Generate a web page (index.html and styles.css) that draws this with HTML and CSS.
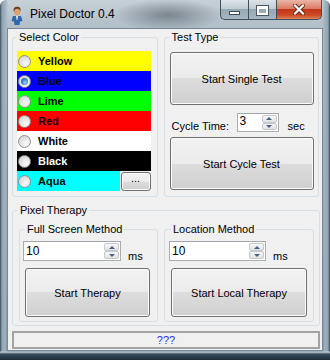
FILE: index.html
```html
<!DOCTYPE html>
<html lang="en">
<head>
    <meta charset="UTF-8">
    <title>Pixel Doctor 0.4</title>
    <link rel="stylesheet" href="styles.css">
</head>
<body>
<div class="window">
    <div class="titlebar">
        <svg class="app-icon" width="12" height="19" viewBox="0 0 12 19">
            <path d="M2.5 4 Q3 0.5 6.5 0.8 Q10 1 9.5 4.5 L9 6 L3 6 Z" fill="#6a3b1e"/>
            <ellipse cx="6.2" cy="6" rx="3" ry="3.2" fill="#dba06e"/>
            <path d="M2 10 L10 10 L11.5 15 L9 15.5 L8.5 19 L3.5 19 L3 15.5 L0.5 15 Z" fill="#2e68ae"/>
            <path d="M5 10 L7 10 L6.4 14 L5.6 14 Z" fill="#e8e8e8"/>
        </svg>
        <span class="title">Pixel Doctor 0.4</span>
        <div class="caption">
            <div class="cap cap-min"><span class="glyph-min"></span></div>
            <div class="cap cap-max"><span class="glyph-max"></span></div>
            <div class="cap cap-close">
                <svg width="12" height="11" viewBox="0 0 12 11">
                    <path d="M2 1.5 L10 9.5 M10 1.5 L2 9.5" stroke="#5a2416" stroke-width="4" stroke-linecap="square"/>
                    <path d="M2 1.5 L10 9.5 M10 1.5 L2 9.5" stroke="#ffffff" stroke-width="2.2" stroke-linecap="square"/>
                </svg>
            </div>
        </div>
    </div>

    <div class="client">
        <div class="top-row">
            <fieldset class="group color-group">
                <legend>Select Color</legend>
                <div class="color-list">
                    <label class="color-row c-yellow"><span class="radio"></span>Yellow</label>
                    <label class="color-row c-blue"><span class="radio checked"></span>Blue</label>
                    <label class="color-row c-lime"><span class="radio"></span>Lime</label>
                    <label class="color-row c-red"><span class="radio"></span>Red</label>
                    <label class="color-row c-white"><span class="radio"></span>White</label>
                    <label class="color-row c-black"><span class="radio"></span>Black</label>
                    <div class="aqua-line">
                        <label class="color-row c-aqua"><span class="radio"></span>Aqua</label>
                        <button class="btn btn-more">...</button>
                    </div>
                </div>
            </fieldset>

            <fieldset class="group test-group">
                <legend>Test Type</legend>
                <button class="btn btn-test">Start Single Test</button>
                <div class="cycle-row">
                    <span class="cycle-label">Cycle Time:</span>
                    <div class="spin spin-cycle">
                        <span class="spin-value">3</span>
                        <span class="spin-btns"><span class="spin-up"></span><span class="spin-down"></span></span>
                    </div>
                    <span class="unit unit-sec">sec</span>
                </div>
                <button class="btn btn-test btn-cycle">Start Cycle Test</button>
            </fieldset>
        </div>

        <fieldset class="group therapy-group">
            <legend>Pixel Therapy</legend>
            <div class="therapy-cols">
                <fieldset class="group sub sub-full">
                    <legend>Full Screen Method</legend>
                    <div class="ms-row">
                        <div class="spin spin-full">
                            <span class="spin-value">10</span>
                            <span class="spin-btns"><span class="spin-up"></span><span class="spin-down"></span></span>
                        </div>
                        <span class="unit">ms</span>
                    </div>
                    <button class="btn btn-therapy">Start Therapy</button>
                </fieldset>
                <fieldset class="group sub sub-local">
                    <legend>Location Method</legend>
                    <div class="ms-row">
                        <div class="spin spin-local">
                            <span class="spin-value">10</span>
                            <span class="spin-btns"><span class="spin-up"></span><span class="spin-down"></span></span>
                        </div>
                        <span class="unit">ms</span>
                    </div>
                    <button class="btn btn-therapy btn-local">Start Local Therapy</button>
                </fieldset>
            </div>
        </fieldset>

        <div class="status">???</div>
    </div>
</div>
</body>
</html>
```

FILE: styles.css
```css
body {
    margin: 0;
    font-family: "Liberation Sans", Arial, sans-serif;
    font-size: 11px;
    color: #000;
    background: #ffffff;
}
.window {
    width: 330px;
    height: 360px;
    box-sizing: border-box;
    border-radius: 6px 6px 0 0;
    display: flex;
    flex-direction: column;
    background:
        linear-gradient(to top, #1f2d38 0, #3a4f60 6px, #c9d3da 8px, rgba(0,0,0,0) 9px),
        radial-gradient(ellipse 55px 16px at 168px 15px, rgba(70,80,90,0.55), rgba(70,80,90,0) 100%),
        linear-gradient(to right, #3b4b57 0, #8fa3b2 2px, #9fb2bf 5px, rgba(0,0,0,0) 8px),
        linear-gradient(to left, #3b4b57 0, #8fa3b2 2px, #9fb2bf 5px, rgba(0,0,0,0) 8px),
        linear-gradient(to bottom, #c7d0d6 0, #b1bec7 28px, #95a9b7 180px, #6c8597 100%);
}

/* title bar */
.titlebar {
    height: 28px;
    display: flex;
    align-items: flex-start;
}
.app-icon {
    margin: 6px 0 0 11px;
    flex: none;
}
.title {
    margin: 7px 0 0 7px;
    font-size: 12px;
    line-height: 15px;
    color: #000;
}
.caption {
    margin-left: auto;
    margin-right: 8px;
    display: flex;
}
.cap {
    height: 20px;
    box-sizing: border-box;
    border: 1px solid #3f4f5b;
    border-top: none;
    display: flex;
    align-items: center;
    justify-content: center;
}
.cap-min {
    width: 28px;
    border-right: none;
    border-radius: 0 0 0 5px;
    background: linear-gradient(#dde4e9 0, #c2ccd3 45%, #97a8b3 50%, #a7b6c0 100%);
}
.cap-max {
    width: 28px;
    border-right: none;
    background: linear-gradient(#dde4e9 0, #c2ccd3 45%, #97a8b3 50%, #a7b6c0 100%);
}
.cap-close {
    width: 46px;
    border-radius: 0 0 5px 0;
    background: linear-gradient(#eab6a8 0, #dc7c64 45%, #c3371a 50%, #cc4a25 80%, #e0855a 100%);
}
.glyph-min {
    width: 9px;
    height: 2px;
    margin-top: 6px;
    background: #fff;
    border: 1px solid #3e4a54;
}
.glyph-max {
    width: 7px;
    height: 4px;
    border: 2px solid #fff;
    border-top-width: 3px;
    outline: 1px solid #4a5864;
    margin-top: 1px;
}

/* client area */
.client {
    margin: 0 7px;
    height: 323px;
    box-sizing: border-box;
    border: 1px solid #788894;
    background: #f0f0f0;
    padding: 2px 3px 0 4px;
    display: flex;
    flex-direction: column;
}
.top-row {
    display: flex;
    gap: 6px;
}
.group {
    margin: 0;
    min-width: 0;
    box-sizing: border-box;
    border: 1px solid #d5dfe5;
    border-radius: 3px;
}
.group legend {
    padding: 0 2px;
    font-size: 11px;
    line-height: 13px;
}
.color-group {
    width: 146px;
    height: 166px;
    padding: 7px 6px 5px 4px;
}
.test-group {
    width: 156px;
    height: 166px;
    padding: 8px 5px 5px 5px;
    display: flex;
    flex-direction: column;
}

/* color list */
.color-list {
    display: flex;
    flex-direction: column;
}
.color-row {
    display: flex;
    align-items: center;
    height: 20px;
    font-weight: bold;
    font-size: 11px;
}
.c-yellow { background: #ffff00; }
.c-blue { background: #0000ff; }
.c-lime { background: #00ff00; }
.c-red { background: #ff0000; }
.c-white { background: #ffffff; }
.c-black { background: #000000; color: #fff; }
.c-aqua { background: #00ffff; flex: 1; }
.aqua-line {
    display: flex;
    height: 20px;
}
.radio {
    width: 13px;
    height: 13px;
    box-sizing: border-box;
    margin: 0 7px 0 1px;
    border-radius: 50%;
    border: 1px solid #8f8f8f;
    background: radial-gradient(circle at 65% 70%, #fbfbfb 0, #e6e6e6 45%, #c9c9c9 100%);
    display: flex;
    align-items: center;
    justify-content: center;
}
.radio.checked::after {
    content: "";
    width: 7px;
    height: 7px;
    border-radius: 50%;
    background: radial-gradient(circle at 60% 65%, #9fd2f6 0, #3d86c6 50%, #12406e 100%);
}

/* buttons */
.btn {
    margin: 0;
    padding: 0;
    box-sizing: border-box;
    border: 1px solid #707070;
    border-radius: 3px;
    background: linear-gradient(#f2f2f2 0, #ebebeb 50%, #dddddd 50%, #cfcfcf 100%);
    box-shadow: inset 0 0 0 1px #fbfbfb;
    font-family: "Liberation Sans", Arial, sans-serif;
    font-size: 11px;
    color: #000;
}
.btn-more {
    width: 30px;
    height: 19px;
    margin: 1px 0 0 1px;
    line-height: 20px;
    display: flex;
    align-items: flex-end;
    justify-content: center;
    padding-bottom: 2px;
}
.btn-test {
    width: 144px;
    height: 53px;
    flex: none;
}
.btn-cycle {
    margin-top: 4px;
}

/* spin boxes */
.cycle-row {
    display: flex;
    align-items: flex-end;
    height: 20px;
    margin-top: 8px;
}
.cycle-label {
    width: 65px;
    margin-left: 2px;
    line-height: 13px;
    flex: none;
}
.unit {
    line-height: 13px;
    margin-left: 7px;
}
.unit-sec {
    margin-left: 9px;
}
.spin {
    display: flex;
    height: 20px;
    box-sizing: border-box;
    background: #fff;
    border: 1px solid #abadb3;
    border-top-color: #a1a4ab;
    flex: none;
}
.spin-cycle { width: 42px; height: 19px; align-self: flex-start; }
.spin-full { width: 98px; }
.spin-local { width: 97px; }
.spin-value {
    flex: 1;
    padding: 2px 0 0 2px;
    font-size: 12px;
    line-height: 14px;
}
.spin-cycle .spin-value {
    padding-top: 0;
}
.spin-btns {
    width: 15px;
    padding: 1px 1px 1px 0;
    display: flex;
    flex-direction: column;
    gap: 0;
}
.spin-up, .spin-down {
    flex: 1;
    border: 1px solid #c0c8d0;
    border-radius: 2px;
    background: linear-gradient(#f7f7f7, #e2e2e2);
    display: flex;
    align-items: center;
    justify-content: center;
}
.spin-up::after {
    content: "";
    border-left: 3px solid transparent;
    border-right: 3px solid transparent;
    border-bottom: 3px solid #4b5f82;
}
.spin-down::after {
    content: "";
    border-left: 3px solid transparent;
    border-right: 3px solid transparent;
    border-top: 3px solid #4b5f82;
}

/* pixel therapy */
.therapy-group {
    margin-top: 7px;
    width: 308px;
    height: 122px;
    padding: 6px 5px 3px 6px;
}
.therapy-group > legend {
    margin-left: -1px;
}
.therapy-cols {
    display: flex;
    gap: 6px;
}
.sub {
    height: 99px;
    padding: 5px 3px 4px 3px;
    display: flex;
    flex-direction: column;
}
.sub legend {
    margin-left: 2px;
}
.sub-full { width: 139px; }
.sub-local { width: 150px; padding-left: 4px; }
.ms-row {
    display: flex;
    align-items: flex-end;
    height: 20px;
}
.ms-row .unit {
    margin-bottom: -2px;
}
.btn-therapy {
    margin: 7px 0 0 2px;
    width: 125px;
    height: 49px;
    flex: none;
}
.btn-local {
    width: 136px;
}

/* status bar */
.status {
    margin-top: 5px;
    width: 308px;
    height: 18px;
    box-sizing: border-box;
    border: 2px solid #a3a3a3;
    text-align: center;
    font-size: 11px;
    line-height: 14px;
    color: #3a2cf2;
}
```
